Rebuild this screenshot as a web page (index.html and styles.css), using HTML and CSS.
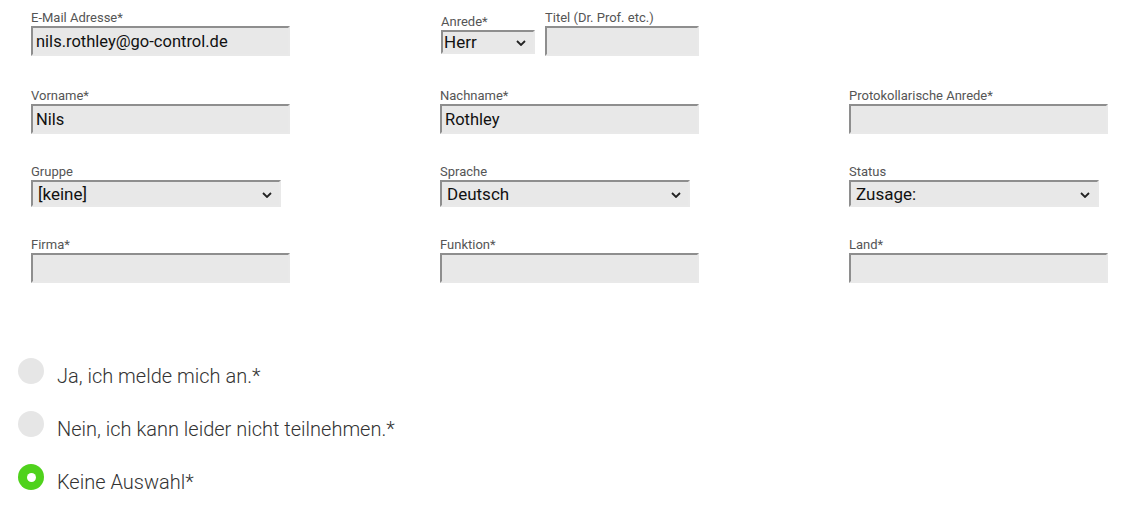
FILE: index.html
```html
<!DOCTYPE html>
<html lang="de">
<head>
<meta charset="utf-8">
<title>Anmeldung</title>
<link rel="stylesheet" href="styles.css">
</head>
<body>
<form class="form">
  <div class="grid">
    <div class="field first">
      <label class="lbl">E-Mail Adresse*</label>
      <input class="inp" type="text" value="nils.rothley@go-control.de">
    </div>
    <div class="field first pair">
      <div class="anrede">
        <label class="lbl">Anrede*</label>
        <div class="sel-wrap small">
          <select class="sel"><option>Herr</option></select>
          <svg class="chev" width="10" height="6" viewBox="0 0 10 6"><path d="M1 1l4 4 4-4" fill="none" stroke="#222" stroke-width="1.8"/></svg>
        </div>
      </div>
      <div class="titel">
        <label class="lbl">Titel (Dr. Prof. etc.)</label>
        <input class="inp narrow" type="text" value="">
      </div>
    </div>
    <div class="field first"></div>

    <div class="field">
      <label class="lbl">Vorname*</label>
      <input class="inp" type="text" value="Nils">
    </div>
    <div class="field">
      <label class="lbl">Nachname*</label>
      <input class="inp" type="text" value="Rothley">
    </div>
    <div class="field">
      <label class="lbl">Protokollarische Anrede*</label>
      <input class="inp" type="text" value="">
    </div>

    <div class="field">
      <label class="lbl">Gruppe</label>
      <div class="sel-wrap">
        <select class="sel"><option>[keine]</option></select>
        <svg class="chev" width="10" height="6" viewBox="0 0 10 6"><path d="M1 1l4 4 4-4" fill="none" stroke="#222" stroke-width="1.8"/></svg>
      </div>
    </div>
    <div class="field">
      <label class="lbl">Sprache</label>
      <div class="sel-wrap">
        <select class="sel"><option>Deutsch</option></select>
        <svg class="chev" width="10" height="6" viewBox="0 0 10 6"><path d="M1 1l4 4 4-4" fill="none" stroke="#222" stroke-width="1.8"/></svg>
      </div>
    </div>
    <div class="field">
      <label class="lbl">Status</label>
      <div class="sel-wrap">
        <select class="sel"><option>Zusage:</option></select>
        <svg class="chev" width="10" height="6" viewBox="0 0 10 6"><path d="M1 1l4 4 4-4" fill="none" stroke="#222" stroke-width="1.8"/></svg>
      </div>
    </div>

    <div class="field">
      <label class="lbl">Firma*</label>
      <input class="inp" type="text" value="">
    </div>
    <div class="field">
      <label class="lbl">Funktion*</label>
      <input class="inp" type="text" value="">
    </div>
    <div class="field">
      <label class="lbl">Land*</label>
      <input class="inp" type="text" value="">
    </div>
  </div>

  <div class="choices">
    <div class="choice">
      <span class="radio"></span>
      <span class="choice-text">Ja, ich melde mich an.*</span>
    </div>
    <div class="choice">
      <span class="radio"></span>
      <span class="choice-text">Nein, ich kann leider nicht teilnehmen.*</span>
    </div>
    <div class="choice">
      <span class="radio checked"></span>
      <span class="choice-text">Keine Auswahl*</span>
    </div>
  </div>
</form>
</body>
</html>
```
FILE: styles.css
```css
* { box-sizing: border-box; }
html, body { margin: 0; padding: 0; background: #fff; }
body { font-family: Roboto, "Liberation Sans", Arial, sans-serif; color: #333; }

.form { padding: 10px 0 0 0; }

.grid {
  display: grid;
  grid-template-columns: repeat(3, 259px);
  column-gap: 150px;
  row-gap: 30px;
  padding-left: 31px;
}

.field.first { margin-bottom: 2px; }

.lbl {
  display: block;
  font-size: 13px;
  line-height: 16px;
  color: #555;
  white-space: nowrap;
}

.inp {
  display: block;
  width: 259px;
  height: 30px;
  margin: 0;
  padding: 0 3px;
  background: #e8e8e8;
  border-style: solid;
  border-width: 2px;
  border-color: #8e8e8e #e9e9e9 #e9e9e9 #8e8e8e;
  font-family: Roboto, "Liberation Sans", Arial, sans-serif;
  font-size: 16.5px;
  color: #111;
  outline: none;
}
.inp.narrow { width: 154px; }

.pair {
  display: flex;
  align-items: flex-end;
  gap: 10px;
}
.anrede { margin-left: 1px; margin-bottom: 2px; }

.sel-wrap {
  position: relative;
  width: 250px;
  height: 27px;
}
.sel-wrap.small { width: 94px; height: 24px; }

.sel {
  appearance: none;
  -webkit-appearance: none;
  display: block;
  width: 100%;
  height: 100%;
  margin: 0;
  padding: 0 20px 0 5px;
  background: #e8e8e8;
  border-style: solid;
  border-width: 2px;
  border-color: #8e8e8e #e9e9e9 #e9e9e9 #8e8e8e;
  border-radius: 0;
  font-family: Roboto, "Liberation Sans", Arial, sans-serif;
  font-size: 17px;
  color: #111;
  outline: none;
}
.sel-wrap.small .sel { padding-left: 1px; }

.chev {
  position: absolute;
  right: 9px;
  top: 50%;
  margin-top: -2px;
  pointer-events: none;
}

.choices {
  display: flex;
  flex-direction: column;
  gap: 21px;
  margin-top: 75px;
  padding-left: 18px;
}
.choice {
  display: flex;
  align-items: flex-start;
  gap: 13px;
}
.radio {
  width: 26px;
  height: 26px;
  border-radius: 50%;
  background: #e6e6e6;
  flex: none;
  position: relative;
}
.radio.checked { background: #4fd21c; }
.radio.checked::after {
  content: "";
  position: absolute;
  left: 8.5px;
  top: 8.5px;
  width: 9px;
  height: 9px;
  border-radius: 50%;
  background: #fff;
}
.choice-text {
  margin-top: 4px;
  font-size: 20px;
  line-height: 28px;
  font-weight: 300;
  color: #333;
}
```
